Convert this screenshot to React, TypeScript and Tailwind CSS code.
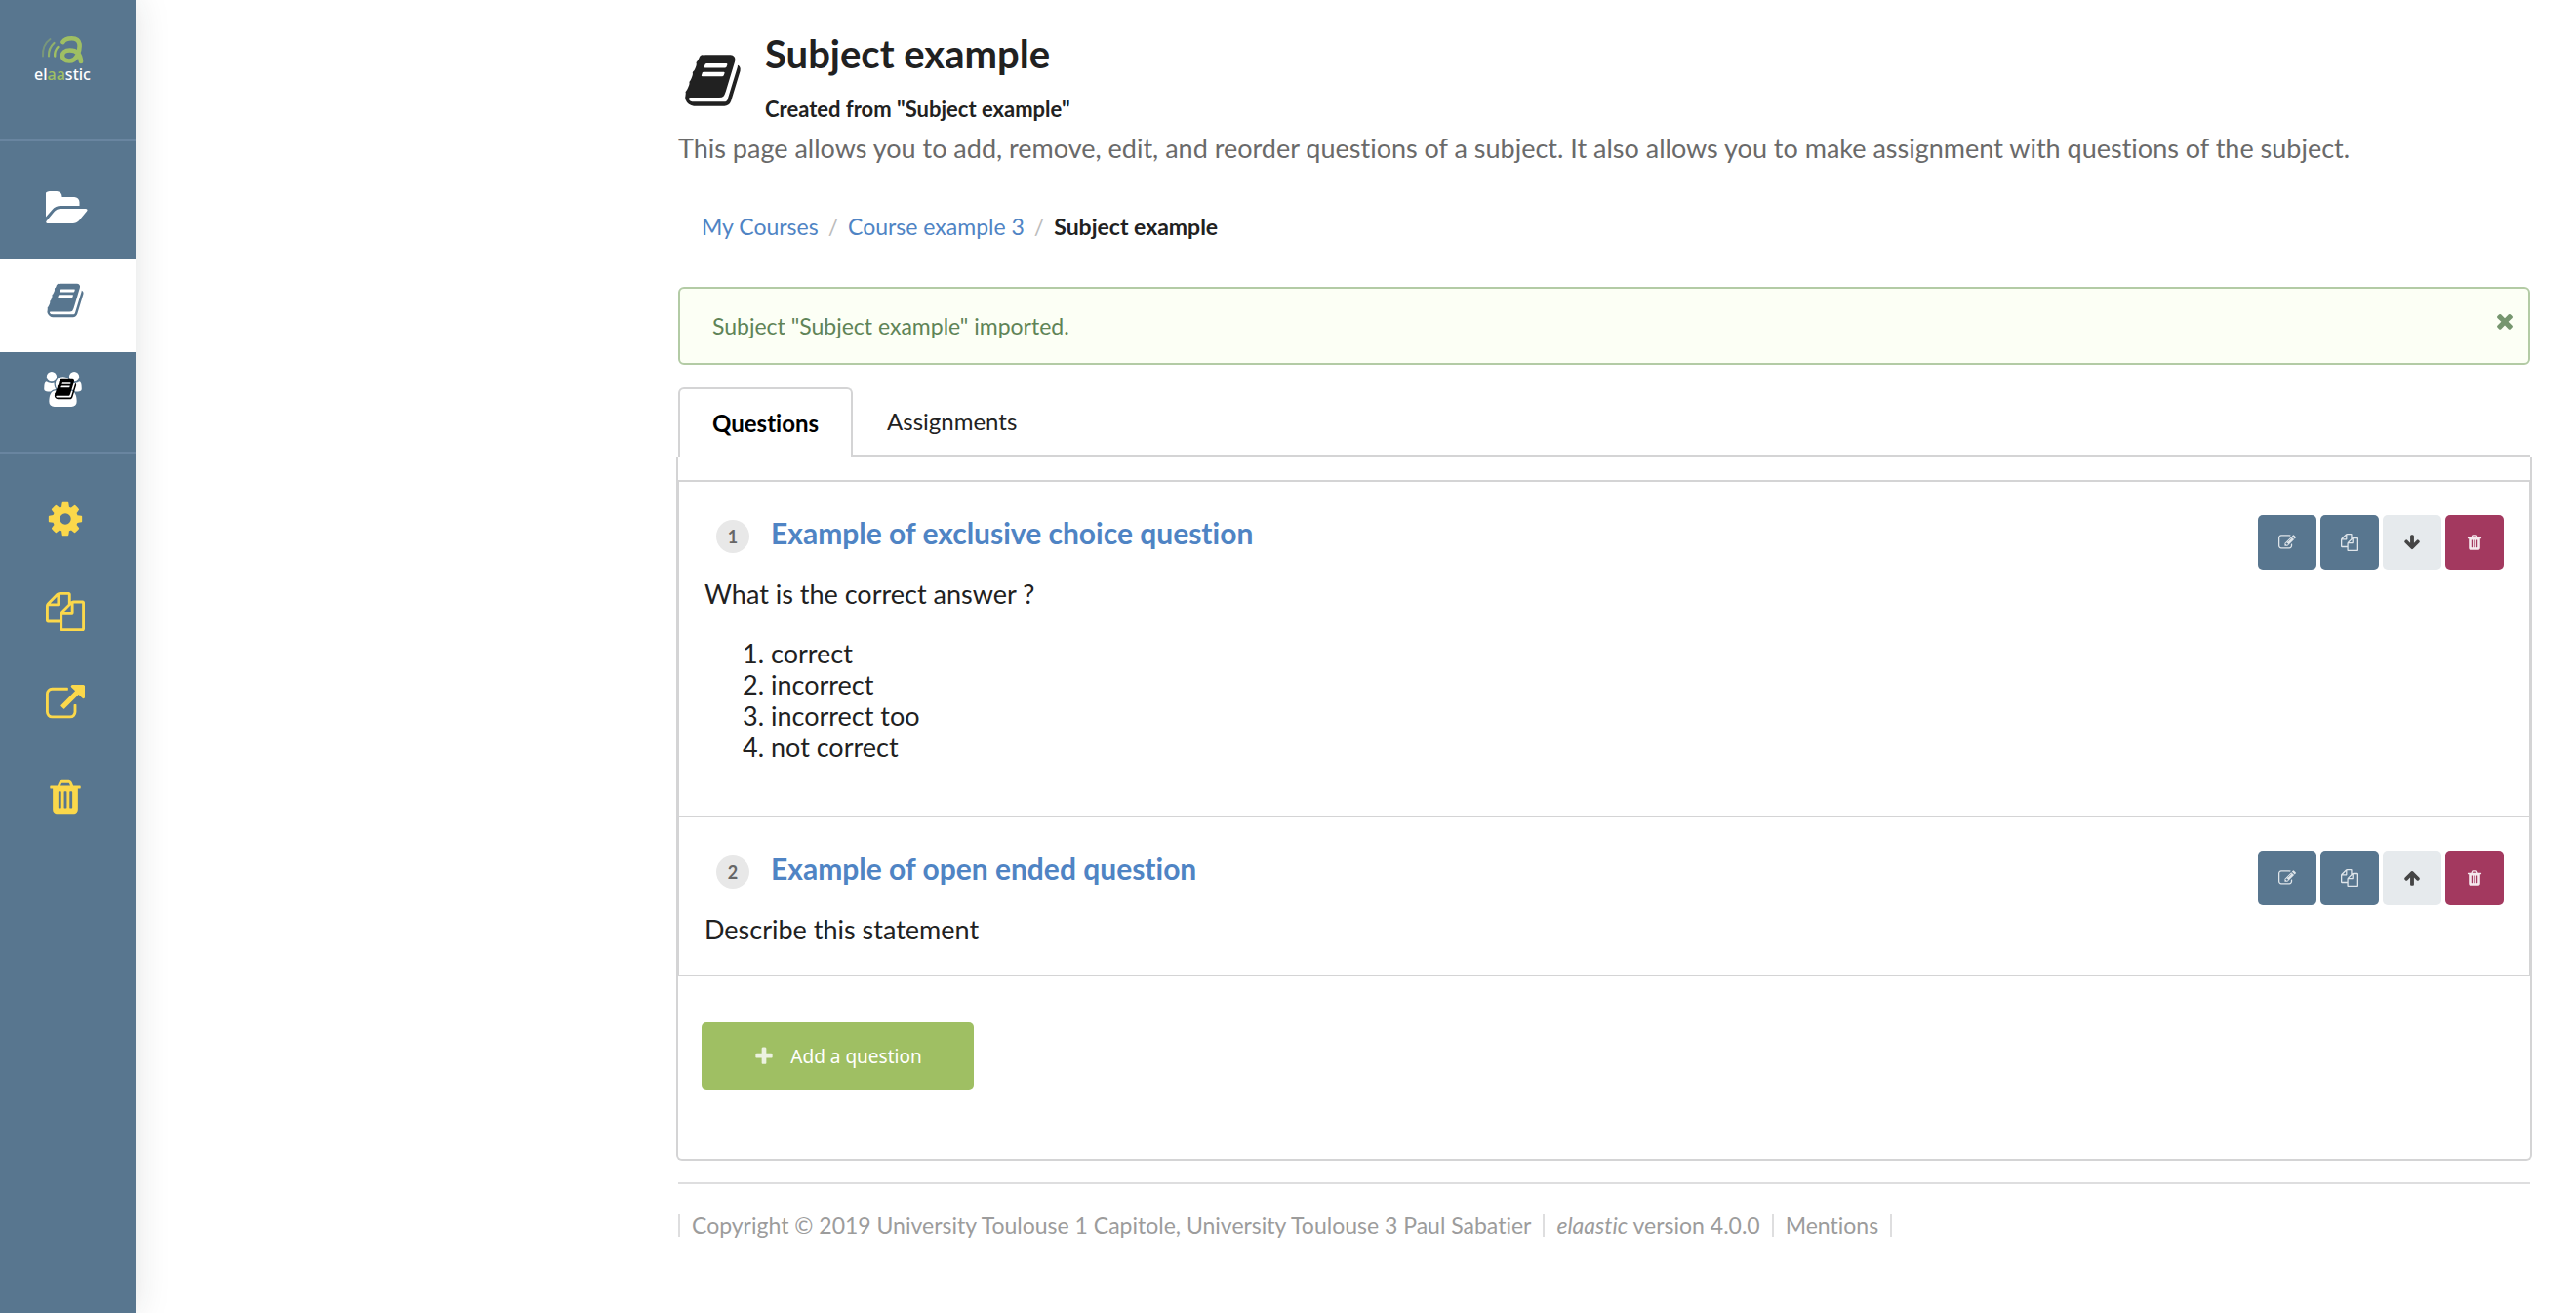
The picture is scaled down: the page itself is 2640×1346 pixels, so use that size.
import React from "react";

const paths = {
  cog: "M1152 896q0-106-75-181t-181-75-181 75-75 181 75 181 181 75 181-75 75-181zm512-109v222q0 12-8 23t-20 13l-185 28q-19 54-39 91 35 50 107 138 10 12 10 25t-9 23q-27 37-99 108t-94 71q-12 0-26-9l-138-108q-44 23-91 38-16 136-29 186-7 28-36 28h-222q-14 0-24.5-8.5t-11.5-21.5l-28-184q-49-16-90-37l-141 107q-10 9-25 9-14 0-25-11-126-114-165-168-7-10-7-23 0-12 8-23 15-21 51-66.5t54-70.5q-27-50-41-99l-183-27q-13-2-21-12.5t-8-23.5v-222q0-12 8-23t19-13l186-28q14-46 39-92-40-57-107-138-10-12-10-24 0-10 9-23 26-36 98.5-107.5t94.5-71.5q13 0 26 10l138 107q44-23 91-38 16-136 29-186 7-28 36-28h222q14 0 24.5 8.5t11.5 21.5l28 184q49 16 90 37l142-107q9-9 24-9 13 0 25 10 129 119 165 170 7 8 7 22 0 12-8 23-15 21-51 66.5t-54 70.5q26 50 41 98l183 28q13 2 21 12.5t8 23.5z",
  copy: "M1696 384q40 0 68 28t28 68v1216q0 40-28 68t-68 28h-960q-40 0-68-28t-28-68v-288h-544q-40 0-68-28t-28-68v-672q0-40 20-88t48-76l408-408q28-28 76-48t88-20h416q40 0 68 28t28 68v328q68-40 128-40h416zm-544 213l-299 299h299v-299zm-640-384l-299 299h299v-299zm196 647l316-316v-416h-384v416q0 40-28 68t-68 28h-416v640h512v-256q0-40 20-88t48-76zm956 804v-1152h-384v416q0 40-28 68t-68 28h-416v640h896z",
  external: "M1408 928v320q0 119-84.5 203.5t-203.5 84.5h-832q-119 0-203.5-84.5t-84.5-203.5v-832q0-119 84.5-203.5t203.5-84.5h704q14 0 23 9t9 23v64q0 14-9 23t-23 9h-704q-66 0-113 47t-47 113v832q0 66 47 113t113 47h832q66 0 113-47t47-113v-320q0-14 9-23t23-9h64q14 0 23 9t9 23zm384-864v512q0 26-19 45t-45 19-45-19l-176-176-652 652q-10 10-23 10t-23-10l-114-114q-10-10-10-23t10-23l652-652-176-176q-19-19-19-45t19-45 45-19h512q26 0 45 19t19 45z",
  trash: "M704 1376v-704q0-14-9-23t-23-9h-64q-14 0-23 9t-9 23v704q0 14 9 23t23 9h64q14 0 23-9t9-23zm256 0v-704q0-14-9-23t-23-9h-64q-14 0-23 9t-9 23v704q0 14 9 23t23 9h64q14 0 23-9t9-23zm256 0v-704q0-14-9-23t-23-9h-64q-14 0-23 9t-9 23v704q0 14 9 23t23 9h64q14 0 23-9t9-23zm-544-992h448l-48-117q-7-9-17-11h-317q-10 2-17 11zm928 32v64q0 14-9 23t-23 9h-96v948q0 83-47 143.500t-113 60.500h-832q-66 0-113-58.500t-47-141.500v-952h-96q-14 0-23-9t-9-23v-64q0-14 9-23t23-9h309l70-167q15-37 54-63t79-26h320q40 0 79 26t54 63l70 167h309q14 0 23 9t9 23z",
  book: "M1703 478q40 57 18 129l-275 906q-19 64-76.5 107.5t-122.5 43.5h-923q-77 0-148.5-53.5t-99.5-131.5q-24-67-2-127 0-4 3-27t4-37q1-8-3-21.5t-3-19.5q2-11 8-21t16.5-23.5 16.5-23.5q23-38 45-91.5t30-91.5q3-10 .5-30t-.5-28q3-11 17-28t17-23q21-36 42-92t25-90q1-9-2.5-32t.5-28q4-13 22-30.5t22-22.5q19-26 42.5-84.5t27.5-96.5q1-8-3-25.5t-2-26.5q2-8 9-18t18-23 17-21q8-12 16.5-30.5t15-35 16-36 19.5-32 26.5-23.5 36-11.5 47.5 5.5l-1 3q38-9 51-9h761q74 0 114 56t18 130l-274 906q-36 119-71.5 153.5t-128.5 34.5h-869q-27 0-38 15-11 16-1 43 24 70 144 70h923q29 0 56-15.5t35-41.5l300-987q7-22 5-57 38 15 59 43zm-1064 2q-4 13 2 22.5t20 9.5h608q13 0 25.5-9.5t16.5-22.5l21-64q4-13-2-22.5t-20-9.5h-608q-13 0-25.5 9.5t-16.5 22.5zm-83 256q-4 13 2 22.5t20 9.5h608q13 0 25.5-9.5t16.5-22.5l21-64q4-13-2-22.5t-20-9.5h-608q-13 0-25.5 9.5t-16.5 22.5z",
  folder: "M1815 952q0 31-31 66l-336 396q-43 51-120.5 86.5t-143.5 35.5h-1088q-34 0-60.5-13t-26.5-43q0-31 31-66l336-396q43-51 120.5-86.5t143.5-35.5h1088q34 0 60.5 13t26.5 43zm-343-344v160h-832q-94 0-197 47.5t-164 119.5l-337 396-5 6q0-4-.5-12.5t-.5-12.5v-960q0-92 66-158t158-66h320q92 0 158 66t66 158v32h544q92 0 158 66t66 158z",
  users: "M593 896q-162 5-265 128h-134q-82 0-138-40.5t-56-118.5q0-353 124-353 6 0 43.5 21t97.5 42.5 119 21.5q67 0 133-23-5 37-5 66 0 139 81 256zm1071 637q0 120-73 189.500t-194 69.500h-874q-121 0-194-69.500t-73-189.500q0-53 3.500-103.500t14-109 26.500-108.500 43-97.500 62-81 85.500-53.500 111.500-20q10 0 43 21.500t73 48 107 48 135 21.500 135-21.500 107-48 73-48 43-21.500q61 0 111.500 20t85.500 53.500 62 81 43 97.500 26.500 108.500 14 109 3.500 103.500zm-1024-1277q0 106-75 181t-181 75-181-75-75-181 75-181 181-75 181 75 75 181zm704 384q0 159-112.500 271.500t-271.500 112.500-271.500-112.500-112.500-271.500 112.500-271.500 271.500-112.500 271.500 112.500 112.500 271.500zm576 225q0 78-56 118.500t-138 40.500h-134q-103-123-265-128 81-117 81-256 0-29-5-66 66 23 133 23 59 0 119-21.500t97.500-42.500 43.500-21q124 0 124 353zm-128-609q0 106-75 181t-181 75-181-75-75-181 75-181 181-75 181 75 75 181z",
  edit: "M888 1184l116-116-152-152-116 116v56h96v96h56zm440-720q-16-16-33 1l-350 350q-17 17-1 33t33-1l350-350q17-17 1-33zm80 594v190q0 119-84.5 203.5t-203.5 84.5h-832q-119 0-203.5-84.5t-84.5-203.5v-832q0-119 84.5-203.5t203.5-84.5h832q63 0 117 25 15 7 18 23 3 17-9 29l-49 49q-14 14-32 8-23-6-45-6h-832q-66 0-113 47t-47 113v832q0 66 47 113t113 47h832q66 0 113-47t47-113v-126q0-13 9-22l64-64q15-15 35-7t20 29zm-96-738l288 288-672 672h-288v-288zm444 132l-92 92-288-288 92-92q28-28 68-28t68 28l152 152q28 28 28 68t-28 68z",
  down: "M1675 832q0 53-37 90l-651 652q-39 37-91 37-53 0-90-37l-651-652q-38-36-38-90 0-53 38-91l74-75q39-37 91-37 53 0 90 37l294 294v-704q0-52 38-90t90-38h128q52 0 90 38t38 90v704l294-294q37-37 90-37 52 0 91 37l75 75q37 39 37 91z",
  up: "M1675 971q0 51-37 90l-75 75q-38 38-91 38-54 0-90-38l-294-293v704q0 52-37.5 84.5t-90.5 32.5h-128q-53 0-90.5-32.5t-37.5-84.5v-704l-294 293q-36 38-90 38t-90-38l-75-75q-38-38-38-90 0-53 38-91l651-651q35-37 90-37 54 0 91 37l651 651q37 39 37 91z",
  plus: "M1600 736v192q0 40-28 68t-68 28h-416v416q0 40-28 68t-68 28h-192q-40 0-68-28t-28-68v-416h-416q-40 0-68-28t-28-68v-192q0-40 28-68t68-28h416v-416q0-40 28-68t68-28h192q40 0 68 28t28 68v416h416q40 0 68 28t28 68z",
  close: "M1490 1322q0 40-28 68l-136 136q-28 28-68 28t-68-28l-294-294-294 294q-28 28-68 28t-68-28l-136-136q-28-28-28-68t28-68l294-294-294-294q-28-28-28-68t28-68l136-136q28-28 68-28t68 28l294 294 294-294q28-28 68-28t68 28l136 136q28 28 28 68t-28 68l-294 294 294 294q28 28 28 68z",
};

type IconName = keyof typeof paths;

function Icon({ name, className }: { name: IconName; className: string }) {
  const wide = name === "folder" || name === "users";
  return (
    <svg viewBox={wide ? "0 0 1920 1792" : "0 0 1792 1792"} fill="currentColor" aria-hidden="true" className={className}>
      <path d={paths[name]} />
    </svg>
  );
}

function Logo() {
  return (
    <a href="#home" aria-label="elaastic" className="flex h-[145px] flex-col items-center border-b-2 border-[#6985a0] pt-[37px] pr-[11px] text-white">
      <svg viewBox="0 0 44 30" fill="none" strokeLinecap="round" className="h-[30px] w-[44px]" aria-hidden="true">
        <path d="M9.5 3C4 7 1.5 13 2 20.5" stroke="#9fbf63" strokeOpacity="0.45" strokeWidth="2" />
        <path d="M13.5 7C9.5 10.5 7.8 15 8 20.500" stroke="#9fbf63" strokeOpacity="0.8" strokeWidth="2.2" />
        <path d="M17.5 11C15 13.5 14 16.5 14.2 20.5" stroke="#9fbf63" strokeWidth="2.4" />
        <path d="M22.5 6C25 2 38 -0.5 39.5 8C40.2 15 37 25.5 29 25.5C19.5 25.5 19.5 14.5 29.5 14.5C37 14.5 40.5 19 41 26" stroke="#9fbf63" strokeWidth="4.6" />
      </svg>
      <span className="font-['Noto_Sans'] text-[16px] leading-[18px] font-medium">
        el<span className="text-[#9fbf63]">aa</span>stic
      </span>
    </a>
  );
}

const tools: { name: IconName; label: string }[] = [
  { name: "cog", label: "Settings" },
  { name: "copy", label: "Duplicate" },
  { name: "external", label: "Share" },
  { name: "trash", label: "Delete" },
];

function Sidebar() {
  return (
    <nav aria-label="Main" className="z-10 w-[139px] shrink-0 bg-[#58768f] shadow-[0_0_34px_rgba(34,36,38,0.13)]">
      <Logo />
      <div className="flex flex-col border-b-2 border-[#6985a0] text-white">
        <a href="#courses" aria-label="Courses" className="flex h-[121px] items-center justify-center pt-[17px] pr-[1px]">
          <Icon name="folder" className="h-[42px] w-[45px]" />
        </a>
        <a href="#subjects" aria-label="Subjects" aria-current="page" className="flex h-[95px] items-center justify-center bg-white pr-[5px] pb-[12px] text-[#58768f]">
          <Icon name="book" className="size-10" />
        </a>
        <a href="#assignments" aria-label="Assignments" className="relative flex h-[102px] justify-center pt-[20px] pr-[11px]">
          <Icon name="users" className="h-[36px] w-[39px]" />
          <Icon name="book" className="absolute top-[26px] left-[55px] size-6 text-black" />
        </a>
      </div>
      <div className="flex flex-col pt-[19px] text-[#fbd84b]">
        {tools.map((t) => (
          <button key={t.name} type="button" aria-label={t.label} className="flex h-[95px] items-center justify-center pr-[5px]">
            <Icon name={t.name} className="size-10" />
          </button>
        ))}
      </div>
    </nav>
  );
}

function ActionButton({ name, label, tone }: { name: IconName; label: string; tone: string }) {
  return (
    <button type="button" aria-label={label} className={`flex h-14 w-[60px] items-center justify-center rounded-[5px] ${tone}`}>
      <Icon name={name} className="size-[18px]" />
    </button>
  );
}

function Question({ index, title, move, className, children }: { index: number; title: string; move: "up" | "down"; className: string; children: React.ReactNode }) {
  return (
    <article className={`border-t-2 border-[#d4d4d5] pr-[26px] pl-[26px] ${className}`}>
      <div className="flex h-[92px] items-start pt-[32px]">
        <span className="mt-[7px] ml-[12px] flex size-[34px] items-center justify-center rounded-full bg-[#e8e8e8] text-[18px] font-bold text-[#666666]">{index}</span>
        <h2 className="ml-[22px] flex-1 text-[30px] leading-10 font-bold text-[#4f84c4]">
          <a href={`#question-${index}`}>{title}</a>
        </h2>
        <div className="mt-[2px] flex gap-1">
          <ActionButton name="edit" label="Edit" tone="bg-[#58768f] text-[#dfe5ea]" />
          <ActionButton name="copy" label="Duplicate" tone="bg-[#58768f] text-[#dfe5ea]" />
          <ActionButton name={move} label={`Move ${move}`} tone="bg-[#e6eaed] text-[#454545]" />
          <ActionButton name="trash" label="Delete" tone="bg-[#a3395f] text-[#f5e8ed]" />
        </div>
      </div>
      <div className="pt-[7px] text-[27px] leading-8">{children}</div>
    </article>
  );
}

export default function App() {
  return (
    <div className="flex min-h-screen bg-white font-['Lato',sans-serif] text-[23px] leading-8 text-[#212121] [font-variant-ligatures:none]">
      <Sidebar />
      <main className="flex-1 pt-[30px] pr-[47px] pl-[556px]">
        <header>
          <div className="flex">
            <Icon name="book" className="mt-[22px] mr-[23px] ml-[5px] size-[61px]" />
            <div>
              <h1 className="text-[40px] leading-[50px] font-bold">Subject example</h1>
              <p className="mt-4 text-[22px] font-bold">Created from "Subject example"</p>
            </div>
          </div>
          <p className="mt-2 text-[27px] text-[#6a6a6a]">
            This page allows you to add, remove, edit, and reorder questions of a subject. It also allows you to make assignment with questions of the subject.
          </p>
        </header>

        <nav aria-label="Breadcrumb" className="mt-12 flex gap-[10px] pl-6">
          <a href="#courses" className="text-[#4f84c4]">My Courses</a>
          <span className="text-[#bcbcbc]">/</span>
          <a href="#course" className="text-[#4f84c4]">Course example 3</a>
          <span className="text-[#bcbcbc]">/</span>
          <span className="font-bold">Subject example</span>
        </nav>

        <div role="status" className="mt-[46px] flex h-20 items-center rounded-[6px] border-2 border-[#b3cba5] bg-[#fcfff5] pr-[12px] pl-[33px] text-[#5f8457]">
          <p className="flex-1">Subject "Subject example" imported.</p>
          <button type="button" aria-label="Close" className="pb-[10px] text-[#76966f]">
            <Icon name="close" className="size-[24px]" />
          </button>
        </div>

        <div role="tablist" className="mt-[23px] flex border-b-2 border-[#d4d4d5] text-[24px]">
          <button type="button" role="tab" aria-selected="true" className="-mb-[2px] h-[71px] rounded-t-[6px] border-2 border-b-0 border-[#d4d4d5] bg-white px-[33px] font-bold text-black">
            Questions
          </button>
          <button type="button" role="tab" aria-selected="false" className="px-[35px]">
            Assignments
          </button>
        </div>

        <section className="-mx-[2px] rounded-b-[6px] border-2 border-t-0 border-[#d4d4d5] pt-6 pb-[71px]">
          <div className="border-x border-b-2 border-[#d4d4d5]">
            <Question index={1} title="Example of exclusive choice question" move="down" className="pb-[54px]">
              <p>What is the correct answer ?</p>
              <ol className="mt-[29px] list-decimal pl-[68px]">
                <li>correct</li>
                <li>incorrect</li>
                <li>incorrect too</li>
                <li>not correct</li>
              </ol>
            </Question>
            <Question index={2} title="Example of open ended question" move="up" className="pb-[30px]">
              <p>Describe this statement</p>
            </Question>
          </div>
          <button type="button" className="mt-[47px] ml-6 flex h-[69px] w-[279px] items-center justify-center gap-4 rounded-[5px] bg-[#9fbf63] font-['Noto_Sans'] text-[19px] text-white">
            <Icon name="plus" className="size-[22px] text-[#ecf2e0]" />
            Add a question
          </button>
        </section>

        <footer className="mt-[22px] border-t-2 border-[#dededf] pt-[30px] text-[#9c9c9c]">
          <ul className="flex leading-6">
            <li className="border-x-2 border-[#dededf] px-[12px]">Copyright © 2019 University Toulouse 1 Capitole, University Toulouse 3 Paul Sabatier</li>
            <li className="border-r-2 border-[#dededf] px-[12px]"><em>elaastic</em> version 4.0.0</li>
            <li className="border-r-2 border-[#dededf] px-[12px]"><a href="#mentions">Mentions</a></li>
          </ul>
        </footer>
      </main>
    </div>
  );
}
